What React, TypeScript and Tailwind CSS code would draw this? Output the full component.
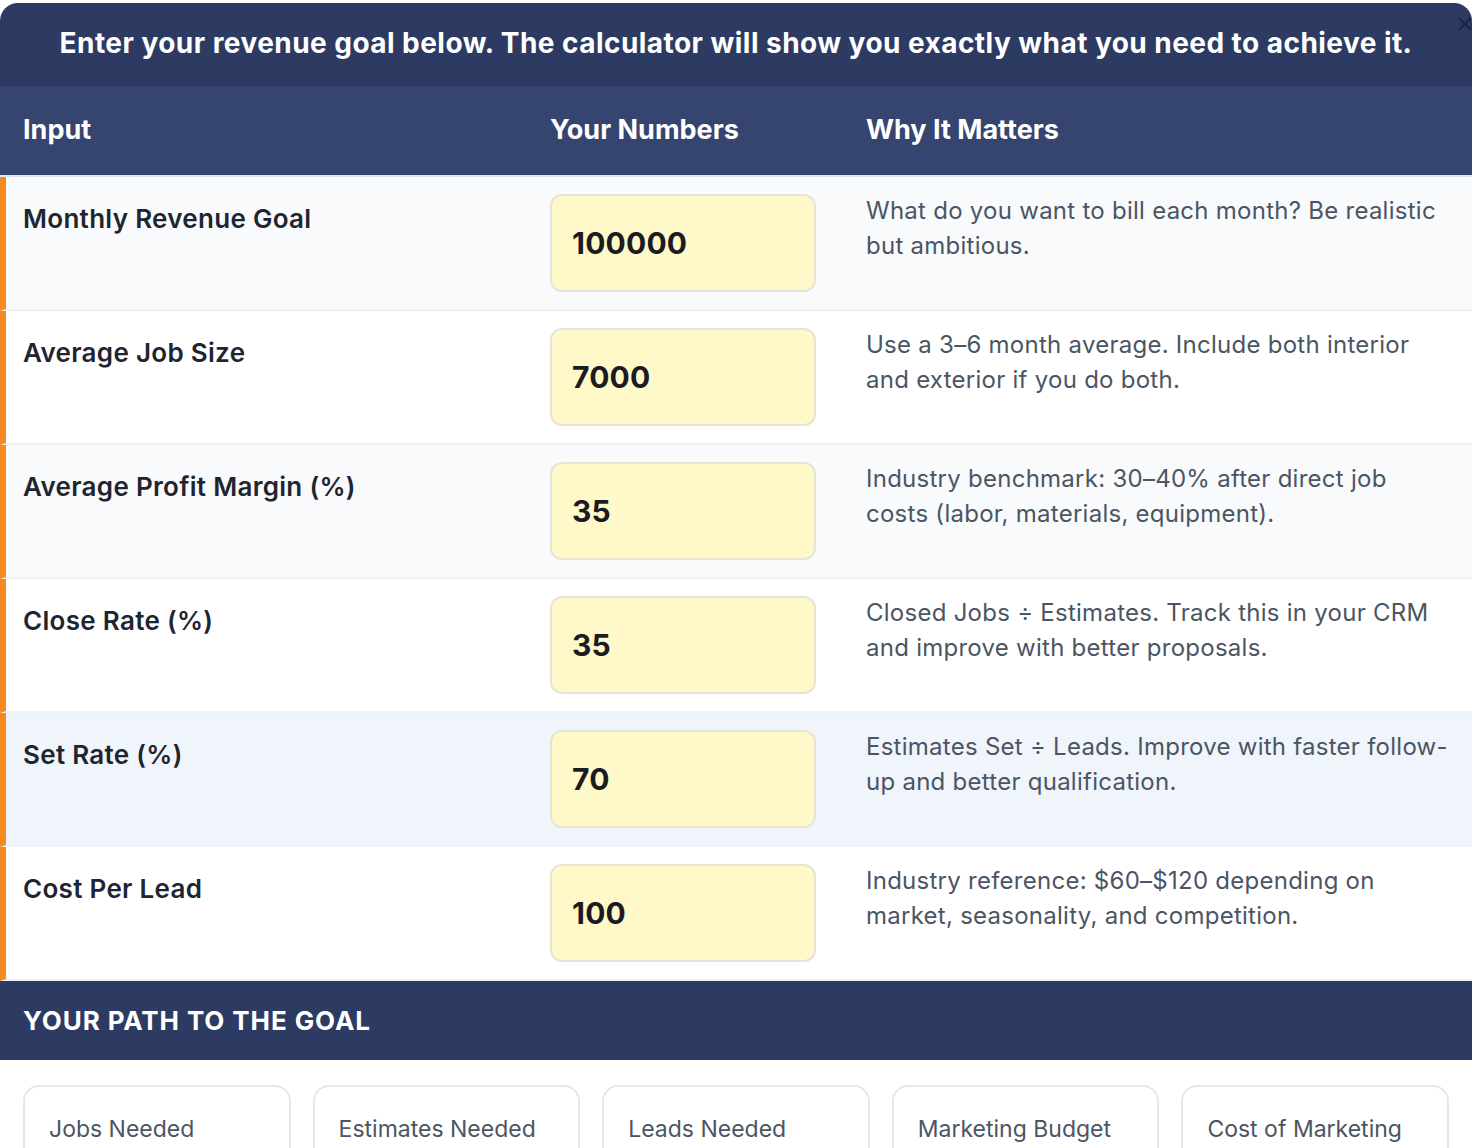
import React, { useState } from 'react';

interface InputRow {
  label: string;
  value: string;
  why: string;
}

const ROWS: InputRow[] = [
  {
    label: 'Monthly Revenue Goal',
    value: '100000',
    why: 'What do you want to bill each month? Be realistic but ambitious.',
  },
  {
    label: 'Average Job Size',
    value: '7000',
    why: 'Use a 3–6 month average. Include both interior and exterior if you do both.',
  },
  {
    label: 'Average Profit Margin (%)',
    value: '35',
    why: 'Industry benchmark: 30–40% after direct job costs (labor, materials, equipment).',
  },
  {
    label: 'Close Rate (%)',
    value: '35',
    why: 'Closed Jobs ÷ Estimates. Track this in your CRM and improve with better proposals.',
  },
  {
    label: 'Set Rate (%)',
    value: '70',
    why: 'Estimates Set ÷ Leads. Improve with faster follow-up and better qualification.',
  },
  {
    label: 'Cost Per Lead',
    value: '100',
    why: 'Industry reference: $60–$120 depending on market, seasonality, and competition.',
  },
];

const RESULTS = ['Jobs Needed', 'Estimates Needed', 'Leads Needed', 'Marketing Budget', 'Cost of Marketing'];

const App: React.FC = () => {
  const [values, setValues] = useState<string[]>(ROWS.map((r) => r.value));
  const [hovered, setHovered] = useState<number>(4);

  return (
    <div className="min-h-screen bg-white pt-[3px] font-['Inter','Noto_Sans',sans-serif]">
      <div className="relative rounded-t-[18px] overflow-hidden">
        {/* close button */}
        <button className="absolute top-[10px] right-[-4px] z-10 text-[#1b2440]">
          <svg className="w-[22px] h-[22px]" fill="none" stroke="currentColor" viewBox="0 0 24 24">
            <path strokeLinecap="round" strokeWidth="2" d="M6 6l12 12M18 6L6 18" />
          </svg>
        </button>

        {/* intro banner */}
        <div className="bg-[#2d3b63] h-[83px] pb-[4px] flex items-center justify-center">
          <p className="text-white text-[28px] font-bold tracking-[0.45px]">
            Enter your revenue goal below. The calculator will show you exactly what you need to achieve it.
          </p>
        </div>

        {/* table head */}
        <div className="grid grid-cols-[527px_316px_1fr] bg-[#36456f] h-[91px] items-center text-white text-[27px] font-bold border-b-2 border-[#dfe6f0]">
          <div className="pl-[23px]">Input</div>
          <div className="pl-[23px]">Your Numbers</div>
          <div className="pl-[23px]">Why It Matters</div>
        </div>

        {/* rows */}
        {ROWS.map((row, idx) => {
          const bg = hovered === idx ? 'bg-[#f0f4fb]' : idx % 2 === 0 ? 'bg-[#f8fafc]' : 'bg-white';
          return (
            <div
              key={row.label}
              onMouseEnter={() => setHovered(idx)}
              className={`grid grid-cols-[521px_316px_1fr] h-[134px] border-b-2 border-[#edf0f4] border-l-[6px] border-l-[#f58a1f] ${bg}`}
            >
              <div className="pl-[17px] pt-[26px] text-[26px] font-semibold tracking-[0.3px] text-[#1f2530] leading-[32px]">
                {row.label}
              </div>
              <div className="pl-[23px] pt-[17px]">
                <input
                  value={values[idx]}
                  onChange={(e) => {
                    const next = [...values];
                    next[idx] = e.target.value;
                    setValues(next);
                  }}
                  className="w-[266px] h-[98px] rounded-[12px] border-2 border-[#e6e4d6] bg-[#fff8c9] px-[20px] text-[30px] font-bold tracking-[0.2px] text-[#1c1b22] outline-none"
                />
              </div>
              <div className="pl-[23px] pr-[20px] pt-[16px] text-[24px] tracking-[0.26px] leading-[35px] text-[#4b5563]">
                {row.why}
              </div>
            </div>
          );
        })}

        {/* results */}
        <div className="bg-[#2d3b63] h-[79px] flex items-center pl-[23px]">
          <h2 className="text-white text-[26px] font-bold uppercase tracking-[0.9px]">Your Path to the Goal</h2>
        </div>

        <div className="grid grid-cols-5 gap-[22px] px-[23px] pt-[25px] pb-6">
          {RESULTS.map((r) => (
            <div key={r} className="h-[120px] rounded-[16px] border-2 border-[#e5e7eb] bg-white px-[24px] pt-[26px]">
              <div className="text-[23px] text-[#4b5563] leading-[32px]">{r}</div>
            </div>
          ))}
        </div>
      </div>
    </div>
  );
};

export default App;
